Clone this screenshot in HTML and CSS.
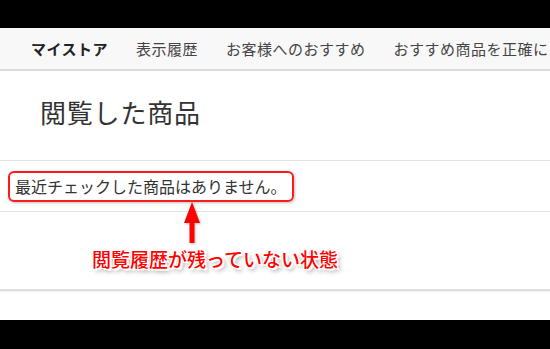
FILE: index.html
```html
<!DOCTYPE html>
<html lang="ja">
<head>
<meta charset="utf-8">
<title>閲覧した商品</title>
<link rel="stylesheet" href="styles.css">
</head>
<body>
<div class="page">
  <div class="topbar"></div>
  <nav class="nav">
    <a class="nav-item nav-item--strong">マイストア</a>
    <a class="nav-item">表示履歴</a>
    <a class="nav-item">お客様へのおすすめ</a>
    <a class="nav-item">おすすめ商品を正確に</a>
  </nav>
  <main class="main">
    <section class="title-row">
      <h1 class="title">閲覧した商品</h1>
    </section>
    <section class="empty-row">
      <span class="empty-text">最近チェックした商品はありません。</span>
    </section>
    <section class="blank-row"></section>
    <div class="spacer"></div>
    <svg class="arrow" width="20" height="44" viewBox="0 0 20 44">
      <polygon points="10,0 18,21 12.5,21 12.5,41 7.5,41 7.5,21 2,21" fill="#ff0000"/>
    </svg>
    <div class="note">閲覧履歴が残っていない状態</div>
  </main>
  <div class="bottombar"></div>
</div>
</body>
</html>
```

FILE: styles.css
```css
html, body {
  margin: 0;
  padding: 0;
  background: #ffffff;
}

body {
  width: 550px;
  height: 349px;
  overflow: hidden;
  font-family: "Noto Sans CJK JP", "Noto Sans", sans-serif;
  color: #333333;
}

.page {
  display: flex;
  flex-direction: column;
  height: 349px;
}

.topbar {
  height: 28px;
  background: #000000;
  flex: none;
}

.nav {
  flex: none;
  height: 41px;
  display: flex;
  align-items: center;
  padding-left: 17px;
  background: #f8f8f8;
  border-bottom: 2px solid #dcdcdc;
  white-space: nowrap;
  overflow: hidden;
}

.nav-item {
  font-size: 15px;
  line-height: 20px;
  letter-spacing: 0.5px;
  color: #444444;
  padding: 0 14px;
  flex: none;
}

.nav-item--strong {
  font-weight: 700;
  color: #222222;
}

.main {
  position: relative;
  flex: 1;
  display: flex;
  flex-direction: column;
}

.title-row {
  height: 90px;
  box-sizing: border-box;
  padding: 25px 0 0 40px;
  border-bottom: 1px solid #e2e2e2;
}

.title {
  margin: 0;
  font-size: 26px;
  line-height: 32px;
  letter-spacing: 0.8px;
  font-weight: 400;
  color: #333333;
}

.empty-row {
  height: 51px;
  box-sizing: border-box;
  display: flex;
  align-items: center;
  padding-left: 8px;
  border-bottom: 1px solid #e2e2e2;
}

.empty-text {
  display: inline-block;
  font-size: 16px;
  line-height: 21px;
  padding: 3px 5px 3px 5px;
  border: 2px solid #ff1a1a;
  border-radius: 6px;
  box-shadow: 1px 1px 3px rgba(0, 0, 0, 0.25);
  color: #333333;
  white-space: nowrap;
}

.blank-row {
  height: 79px;
  box-sizing: border-box;
  border-bottom: 2px solid #dedede;
  box-shadow: 0 1px 1px rgba(0, 0, 0, 0.05);
}

.spacer {
  flex: 1;
}

.arrow {
  position: absolute;
  left: 182px;
  top: 131px;
  filter: drop-shadow(1px 1px 1px rgba(0, 0, 0, 0.25));
}

.note {
  position: absolute;
  left: 92px;
  top: 175px;
  font-size: 19px;
  line-height: 26px;
  font-weight: 500;
  color: #ff0000;
  white-space: nowrap;
  text-shadow:
    1px 0 0 #fff, -1px 0 0 #fff, 0 1px 0 #fff, 0 -1px 0 #fff,
    1px 1px 0 #fff, -1px -1px 0 #fff, 1px -1px 0 #fff, -1px 1px 0 #fff,
    2px 2px 0 #fff, 3px 3px 4px rgba(0, 0, 0, 0.45);
}

.bottombar {
  height: 29px;
  background: #000000;
  flex: none;
}
```
